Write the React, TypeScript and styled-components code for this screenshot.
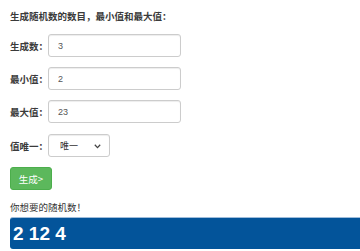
import React from "react";
import styled, { createGlobalStyle } from "styled-components";

const Global = createGlobalStyle`
  html, body { margin: 0; padding: 0; background: #fff; }
  body { font-family: "Liberation Sans", Arial, "Noto Sans CJK SC", sans-serif; color: #333; }
  * { box-sizing: border-box; }
`;

const Page = styled.div`
  display: flex;
  flex-direction: column;
  padding: 8px 0 0 10px;
  width: 360px;
  overflow: hidden;
`;

const Title = styled.div`
  font-family: "Noto Sans CJK SC", sans-serif;
  font-size: 9.5px;
  font-weight: 700;
  line-height: 14px;
  color: #3a3a3a;
  margin-top: 1px;
  margin-bottom: 11px;
`;

const Group = styled.div<{ $top?: number }>`
  display: flex;
  align-items: center;
  height: 23px;
  margin-top: ${(p) => p.$top ?? 0}px;
  margin-bottom: 10px;
`;

const Label = styled.label`
  font-family: "Noto Sans CJK SC", sans-serif;
  font-size: 9.5px;
  font-weight: 700;
  color: #3a3a3a;
  width: 38px;
  white-space: nowrap;
`;

const Input = styled.input`
  width: 133px;
  height: 23px;
  border: 1px solid #ccc;
  border-radius: 3px;
  box-shadow: inset 0 1px 1px rgba(0, 0, 0, 0.075);
  padding: 0 9px;
  font-family: "Liberation Sans", Arial, sans-serif;
  font-size: 9px;
  color: #555;
  outline: none;
`;

const SelectBox = styled.div`
  position: relative;
  width: 62px;
  height: 23px;
  border: 1px solid #ccc;
  border-radius: 3px;
  box-shadow: inset 0 1px 1px rgba(0, 0, 0, 0.075);
  display: flex;
  align-items: center;
  padding: 0 0 0 11px;
  font-family: "Noto Sans CJK SC", sans-serif;
  font-size: 9px;
  color: #333;
`;

const Chevron = styled.svg`
  position: absolute;
  right: 8px;
  top: 9px;
`;

const Button = styled.button`
  width: 42px;
  height: 23px;
  background: #5cb85c;
  border: 1px solid #4cae4c;
  border-radius: 3px;
  color: #fff;
  font-family: "Noto Sans CJK SC", sans-serif;
  font-size: 9.5px;
  padding: 0;
  cursor: pointer;
`;

const Caption = styled.div`
  font-family: "Noto Sans CJK SC", sans-serif;
  font-size: 9.5px;
  line-height: 14px;
  color: #333;
  margin-top: 10px;
  margin-bottom: 3px;
`;

const Result = styled.div`
  height: 32px;
  background: #03549a;
  border-top: 1px solid #9fbddb;
  border-radius: 3px 0 0 3px;
  display: flex;
  align-items: center;
  padding-left: 3px;
  color: #fff;
  font-family: "Liberation Sans", Arial, sans-serif;
  font-weight: 700;
  font-size: 19px;
`;

export default function App() {
  return (
    <>
      <Global />
      <Page>
        <Title>生成随机数的数目，最小值和最大值：</Title>
        <Group>
          <Label>生成数：</Label>
          <Input defaultValue="3" />
        </Group>
        <Group>
          <Label>最小值：</Label>
          <Input defaultValue="2" />
        </Group>
        <Group>
          <Label>最大值：</Label>
          <Input defaultValue="23" />
        </Group>
        <Group $top={1}>
          <Label>值唯一：</Label>
          <SelectBox>
            唯一
            <Chevron width="7" height="5" viewBox="0 0 7 5">
              <path d="M0.8 0.8 L3.5 3.6 L6.2 0.8" fill="none" stroke="#444" strokeWidth="1.3" />
            </Chevron>
          </SelectBox>
        </Group>
        <div>
          <Button>生成&gt;</Button>
        </div>
        <Caption>你想要的随机数！</Caption>
        <Result>2 12 4</Result>
      </Page>
    </>
  );
}
